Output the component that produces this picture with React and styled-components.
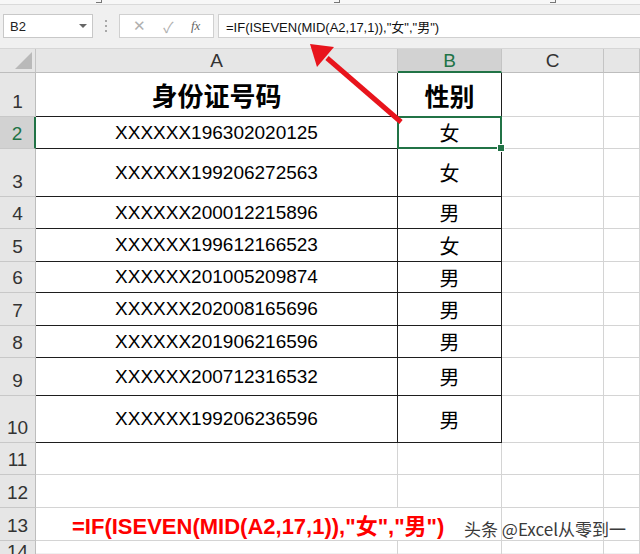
import React from "react";
import styled, { createGlobalStyle } from "styled-components";

const Global = createGlobalStyle`
  html, body { margin: 0; padding: 0; background: #fff; }
  body { width: 640px; height: 554px; overflow: hidden; }
  * { box-sizing: border-box; }
`;

const GREEN = "#217346";
const LINE = "#d4d4d4";
const INK = "#1e1e1e";
const LATIN = `"Liberation Sans", "Noto Sans CJK SC", sans-serif`;
const CJK = `"Noto Sans CJK SC", "Liberation Sans", sans-serif`;

const Page = styled.div`
  position: relative;
  width: 640px;
  height: 554px;
  overflow: hidden;
  background: #f0f0f0;
  font-family: ${LATIN};
`;

/* leftover bottom of the ribbon */
const RibbonEdge = styled.div`
  height: 5px;
  background: #f7f7f7;
  border-bottom: 1px solid #dadada;
  display: flex;
`;
const Launcher = styled.span`
  width: 6px;
  height: 3px;
  margin-left: ${(p) => p.$gap}px;
  border-right: 1px solid #777;
  border-bottom: 1px solid #777;
`;

/* formula bar */
const FormulaBar = styled.div`
  height: 43px;
  display: flex;
  align-items: flex-start;
  padding-top: 9px;
`;
const NameBox = styled.div`
  margin-left: 3px;
  width: 90px;
  height: 24px;
  background: #fff;
  border: 1px solid #c8c8c8;
  display: flex;
  align-items: center;
  justify-content: space-between;
  padding: 0 5px 0 6px;
  font-size: 13px;
  color: #222;
`;
const Caret = styled.span`
  width: 0;
  height: 0;
  border-left: 4px solid transparent;
  border-right: 4px solid transparent;
  border-top: 4px solid #666;
`;
const Dots = styled.div`
  width: 26px;
  height: 24px;
  display: flex;
  flex-direction: column;
  align-items: center;
  justify-content: center;
  gap: 3px;
  span {
    width: 2px;
    height: 2px;
    background: #a8a8a8;
  }
`;
const Tools = styled.div`
  width: 95px;
  height: 24px;
  background: #fff;
  border: 1px solid #d0d0d0;
  display: flex;
  align-items: center;
  justify-content: space-around;
  padding: 0 4px;
  color: #b0b0b0;
  font-size: 15px;
`;
const Fx = styled.span`
  font-family: "Liberation Serif", serif;
  font-style: italic;
  font-size: 13px;
  color: #666;
`;
const FormulaInput = styled.div`
  margin-left: 4px;
  flex: 1;
  height: 24px;
  background: #fff;
  border: 1px solid #d0d0d0;
  border-right: none;
  display: flex;
  align-items: center;
  padding-left: 7px;
  font-size: 13px;
  color: #111;
`;

/* sheet */
const Sheet = styled.div`
  display: grid;
  grid-template-columns: 36px 362px 104px 102px 1fr;
  grid-template-rows: 24px 44px 32px 48px 32px 33px 31px 33px 32px 38px 47px 32px 33px 33px 1fr;
  height: 505px;
  background: #fff;
  border-top: 1px solid #d6d6d6;
`;
const Corner = styled.div`
  position: relative;
  background: #e6e6e6;
  border-right: 1px solid #c4c4c4;
  border-bottom: 1px solid #bdbdbd;
  &::after {
    content: "";
    position: absolute;
    right: 3px;
    bottom: 3px;
    border-left: 17px solid transparent;
    border-bottom: 17px solid #b9b9b9;
  }
`;
const ColHead = styled.div`
  background: ${(p) => (p.$active ? "#d2d2d2" : "#e6e6e6")};
  color: ${(p) => (p.$active ? GREEN : "#333")};
  border-right: 1px solid #c4c4c4;
  border-bottom: ${(p) => (p.$active ? `2px solid ${GREEN}` : "1px solid #bdbdbd")};
  display: flex;
  align-items: center;
  justify-content: center;
  font-size: 19px;
  padding-top: 1px;
`;
const RowHead = styled.div`
  background: ${(p) => (p.$active ? "#d2d2d2" : "#e6e6e6")};
  color: ${(p) => (p.$active ? GREEN : "#333")};
  border-right: ${(p) => (p.$active ? `2px solid ${GREEN}` : "1px solid #bdbdbd")};
  border-bottom: 1px solid #c8c8c8;
  display: flex;
  align-items: flex-end;
  justify-content: center;
  padding-bottom: 3px;
  font-size: 19px;
`;
const Cell = styled.div`
  position: relative;
  display: flex;
  align-items: center;
  justify-content: ${(p) => p.$align || "center"};
  grid-column: ${(p) => (p.$span ? `span ${p.$span}` : "auto")};
  border-right: 1px solid ${(p) => (p.$boxed ? INK : LINE)};
  border-bottom: 1px solid ${(p) => (p.$boxed ? INK : LINE)};
  font-family: ${(p) => (p.$cjk ? CJK : LATIN)};
  font-size: ${(p) => p.$size || 19}px;
  font-weight: ${(p) => (p.$bold ? 700 : 400)};
  color: ${(p) => p.$color || "#000"};
  padding-left: ${(p) => p.$indent || 0}px;
  white-space: nowrap;
  ${(p) =>
    p.$selected &&
    `
    &::after {
      content: "";
      position: absolute;
      left: -1px; top: -1px; right: -1px; bottom: -1px;
      border: 2px solid ${GREEN};
    }
    &::before {
      content: "";
      position: absolute;
      right: -4px; bottom: -4px;
      width: 6px; height: 6px;
      background: ${GREEN};
      border: 1px solid #fff;
      z-index: 1;
    }
  `}
`;

const Overlay = styled.svg`
  position: absolute;
  left: 0;
  top: 0;
  pointer-events: none;
`;

const Watermark = styled.div`
  position: absolute;
  right: 14px;
  bottom: 13px;
  font-family: ${CJK};
  font-size: 17px;
  color: #3a3a3a;
  text-shadow: 0 0 2px #fff, 0 0 2px #fff;
`;

const data = [
  { n: 2, id: "XXXXXX196302020125", g: "女" },
  { n: 3, id: "XXXXXX199206272563", g: "女" },
  { n: 4, id: "XXXXXX200012215896", g: "男" },
  { n: 5, id: "XXXXXX199612166523", g: "女" },
  { n: 6, id: "XXXXXX201005209874", g: "男" },
  { n: 7, id: "XXXXXX202008165696", g: "男" },
  { n: 8, id: "XXXXXX201906216596", g: "男" },
  { n: 9, id: "XXXXXX200712316532", g: "男" },
  { n: 10, id: "XXXXXX199206236596", g: "男" },
];

const FORMULA = '=IF(ISEVEN(MID(A2,17,1)),"女","男")';

const EmptyRow = ({ n }) => (
  <>
    <RowHead>{n}</RowHead>
    <Cell />
    <Cell />
    <Cell />
    <Cell />
  </>
);

export default function App() {
  return (
    <Page>
      <Global />
      <RibbonEdge>
        <Launcher $gap={96} />
        <Launcher $gap={232} />
        <Launcher $gap={210} />
      </RibbonEdge>
      <FormulaBar>
        <NameBox>
          B2
          <Caret />
        </NameBox>
        <Dots>
          <span />
          <span />
          <span />
        </Dots>
        <Tools>
          <span>✕</span>
          <span>✓</span>
          <Fx>fx</Fx>
        </Tools>
        <FormulaInput>{FORMULA}</FormulaInput>
      </FormulaBar>

      <Sheet>
        <Corner />
        <ColHead>A</ColHead>
        <ColHead $active>B</ColHead>
        <ColHead>C</ColHead>
        <ColHead />

        <RowHead>1</RowHead>
        <Cell $boxed $cjk $bold $size={26}>
          身份证号码
        </Cell>
        <Cell $boxed $cjk $bold $size={25}>
          性别
        </Cell>
        <Cell />
        <Cell />

        {data.map((r) => (
          <React.Fragment key={r.n}>
            <RowHead $active={r.n === 2}>{r.n}</RowHead>
            <Cell $boxed>{r.id}</Cell>
            <Cell $boxed $cjk $size={20} $selected={r.n === 2}>
              {r.g}
            </Cell>
            <Cell />
            <Cell />
          </React.Fragment>
        ))}

        <EmptyRow n={11} />
        <EmptyRow n={12} />

        <RowHead>13</RowHead>
        <Cell $span={2} $align="flex-start" $indent={36} $bold $size={22} $color="#ff0000">
          {FORMULA}
        </Cell>
        <Cell />
        <Cell />

        <EmptyRow n={14} />
      </Sheet>

      <Overlay width="640" height="554" viewBox="0 0 640 554">
        <line x1="401" y1="122" x2="327" y2="58" stroke="#e8141c" strokeWidth="5" />
        <polygon points="310,44 334,47 317,67" fill="#e8141c" />
      </Overlay>

      <Watermark>头条 @Excel从零到一</Watermark>
    </Page>
  );
}
